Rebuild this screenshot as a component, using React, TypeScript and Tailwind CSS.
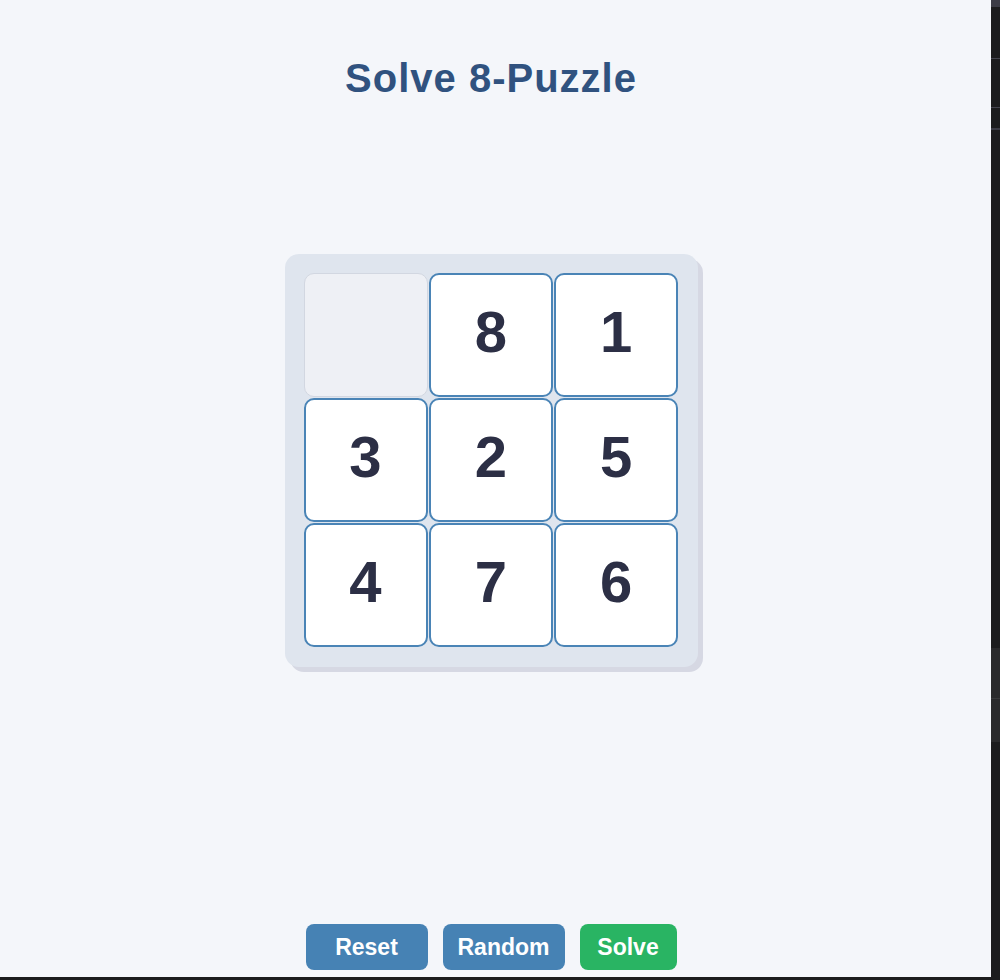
import React, { useState } from 'react';

const START = [0, 8, 1, 3, 2, 5, 4, 7, 6];

export default function App() {
    const [tiles, setTiles] = useState(START);

    return (
        <div className="flex flex-col w-[1000px] h-[980px] bg-[#1c1c1e]" style={{ fontFamily: '"Liberation Sans", Arial, sans-serif' }}>
            <div className="flex flex-1">
                <main className="w-[991px] h-[977px] bg-[#f4f6fa] flex">
                    <div className="w-[982px] flex flex-col items-center">
                        <h1 className="pt-[54px] text-[40px] leading-[48px] font-bold tracking-[1px] text-[#30527f]">Solve 8-Puzzle</h1>

                        <div className="mt-[152px] w-[413px] h-[413px] p-[19px] rounded-[14px] bg-[#dfe5ee] shadow-[5px_5px_0_#d6d8e3]">
                            <div className="grid grid-cols-3 gap-px">
                                {tiles.map((n, i) =>
                                    n === 0 ? (
                                        <div key={i} className="w-[124px] h-[124px] rounded-[10px] border border-[#d2d7e1] bg-[#eef0f5]" />
                                    ) : (
                                        <button
                                            key={i}
                                            className="w-[124px] h-[124px] rounded-[10px] border-2 border-[#4a84b6] bg-white flex items-center justify-center pb-[8px] text-[58px] font-bold text-[#2c2f45]"
                                            onClick={() => {
                                                const e = tiles.indexOf(0);
                                                const d = Math.abs(e - i);
                                                if ((d === 1 && Math.floor(e / 3) === Math.floor(i / 3)) || d === 3) {
                                                    const next = [...tiles];
                                                    next[e] = n;
                                                    next[i] = 0;
                                                    setTiles(next);
                                                }
                                            }}
                                        >
                                            {n}
                                        </button>
                                    )
                                )}
                            </div>
                        </div>

                        <div className="mt-auto mb-[7px] flex gap-[15px]">
                            <button className="w-[122px] h-[46px] rounded-[8px] bg-[#4682b4] text-white text-[23px] font-bold" onClick={() => setTiles(START)}>Reset</button>
                            <button className="w-[122px] h-[46px] rounded-[8px] bg-[#4682b4] text-white text-[23px] font-bold" onClick={() => setTiles([...tiles].sort(() => Math.random() - 0.5))}>Random</button>
                            <button className="w-[97px] h-[46px] rounded-[8px] bg-[#29b463] text-white text-[23px] font-bold">Solve</button>
                        </div>
                    </div>
                </main>
                <div className="w-[9px] flex flex-col">
                    <div className="h-[7px] bg-[#3c3c46]" />
                    <div className="h-[52px] bg-[#1c1c1e] border-b border-[#45454f]" />
                    <div className="h-[49px] bg-[#1c1c1e] border-b border-[#45454f]" />
                    <div className="h-[22px] bg-[#1c1c1e] border-b-2 border-[#3c3c46]" />
                    <div className="h-[518px] bg-[#1c1c1e]" />
                    <div className="h-[51px] bg-[#2a2a2c] border-b border-[#3a3a3c]" />
                    <div className="h-[43px] bg-[#2a2a2c]" />
                    <div className="flex-1 bg-[#1c1c1e]" />
                </div>
            </div>
            <div className="h-[3px] bg-[#1c1c1e]" />
        </div>
    );
}
